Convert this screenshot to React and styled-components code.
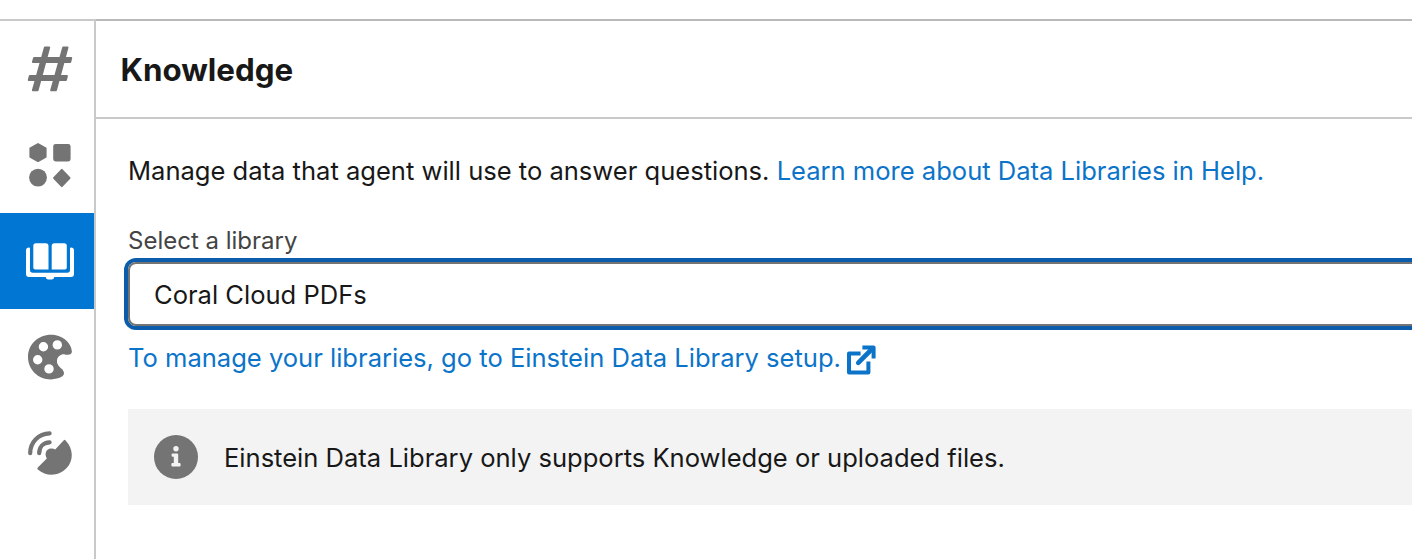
import React from "react";
import styled, { createGlobalStyle } from "styled-components";

const GlobalStyle = createGlobalStyle`
  * { box-sizing: border-box; }
  html, body { margin: 0; padding: 0; background: #fff; overflow: hidden; }
  body { font-family: Inter, "Liberation Sans", sans-serif; color: #181818; }
`;

const Page = styled.div`
  display: flex;
  flex-direction: column;
  height: 559px;
  padding-top: 19px;
  overflow: hidden;
`;

const Workspace = styled.div`
  display: flex;
  flex: 1;
  min-height: 0;
`;

const Rail = styled.nav`
  flex: 0 0 96px;
  display: flex;
  flex-direction: column;
  border-top: 2px solid #c9c9c9;
  border-right: 2px solid #c9c9c9;
`;

const RailItem = styled.a`
  display: flex;
  align-items: center;
  flex: 0 0 96px;
  padding-left: 26px;
  color: ${(p) => (p.$active ? "#fff" : "#747474")};
  background: ${(p) => (p.$active ? "#0176d3" : "transparent")};
`;

const RailIcon = styled.svg`
  width: 48px;
  height: 48px;
  fill: currentColor;
`;

const Panel = styled.main`
  flex: 1;
  min-width: 0;
  display: flex;
  flex-direction: column;
  border-top: 2px solid #b9b9b9;
`;

const PanelHeader = styled.header`
  display: flex;
  align-items: center;
  flex: 0 0 98px;
  padding: 2px 0 0 24.5px;
  border-bottom: 2px solid #c9c9c9;
`;

const Title = styled.h1`
  margin: 0;
  font-size: 31.3px;
  line-height: 40px;
  font-weight: 700;
`;

const Body = styled.section`
  display: flex;
  flex-direction: column;
  padding: 32px 0 0 32px;
`;

const Text = styled.p`
  margin: 0;
  font-size: 25.56px;
  line-height: 40px;
  white-space: nowrap;
`;

const Link = styled.a`
  color: #0b74c9;
  text-decoration: none;
`;

const Label = styled.label`
  margin-top: 30px;
  font-size: 24px;
  line-height: 40px;
  height: 41px;
  color: #444;
`;

const Combobox = styled.div`
  display: flex;
  align-items: center;
  height: 64px;
  margin-right: -40px;
  padding: 2px 0 0 24px;
  border: 2px solid #747474;
  border-radius: 8px;
  box-shadow: 0 0 0 4px #0b5cab;
`;

const SetupRow = styled.div`
  display: flex;
  align-items: center;
  height: 40px;
  margin-top: 12px;
`;

const ExternalIcon = styled.svg`
  width: 32px;
  height: 32px;
  margin: 4px 0 0 4px;
  fill: none;
  stroke: #0b74c9;
  stroke-width: 4;
`;

const Notice = styled.div`
  display: flex;
  align-items: center;
  gap: 26px;
  height: 96px;
  margin-top: 31px;
  padding-left: 26px;
  background: #f3f3f3;
`;

const NoticeText = styled(Text)`
  padding-top: 2px;
`;

const InfoIcon = styled.svg`
  width: 44px;
  height: 44px;
`;

const HashIcon = () => (
  <RailIcon viewBox="0 0 48 48">
    <g stroke="currentColor" strokeWidth="2" strokeLinejoin="round">
      <path d="M18.9 2.4H23.2L11.6 45.3H6.9Z" />
      <path d="M37.2 2.4H41.5L29.9 45.3H25.2Z" />
      <path d="M8.1 13H45.2L44.2 17.1H6.9Z" />
      <path d="M3.8 31H40.9L39.9 35.1H2.8Z" />
    </g>
  </RailIcon>
);

const ShapesIcon = () => (
  <RailIcon viewBox="0 0 48 48">
    <g stroke="currentColor" strokeWidth="2" strokeLinejoin="round">
      <path d="M12 3.1 19.6 7.4V15.8L12 20.1 4.4 15.8V7.4Z" />
      <path d="M35.8 28.9 43.5 37 35.8 45.1 28.1 37Z" />
    </g>
    <rect x="27.2" y="3" width="17.4" height="17.4" rx="2.4" />
    <circle cx="12" cy="36.6" r="8.9" />
  </RailIcon>
);

const BookIcon = () => (
  <RailIcon viewBox="0 0 48 48">
    <path d="M9.8 6.2H19.8Q22.5 6.2 22.5 8.9V32.4H9.3Q7.3 32.4 7.3 30.4V8.9Q7.3 6.2 9.8 6.2Z" />
    <path d="M28.3 6.2H38.3Q40.8 6.2 40.8 8.9V30.4Q40.8 32.4 38.8 32.4H25.7V8.9Q25.7 6.2 28.3 6.2Z" />
    <path d="M3 10.6Q4 10.6 4 11.6V33Q4 35.8 6.8 35.8H41.2Q44 35.8 44 33V11.6Q44 10.6 45 10.6Q48 10.6 48 13.6V37Q48 40 45 40H28.4Q27.8 42.6 25.6 42.6H22.4Q20.2 42.6 19.6 40H3Q0 40 0 37V13.6Q0 10.6 3 10.6Z" />
  </RailIcon>
);

const PaletteIcon = () => (
  <RailIcon viewBox="0 0 48 48">
    <path
      fillRule="evenodd"
      d="M25 1.8C12 1.8 2 11.6 2 24C2 36.6 12 46.4 25 46.4C29 46.4 33 45.4 36 43.6C38.8 42 38.4 39 36.4 36.6C33.4 33.2 30.6 31.6 31 27.4C31.4 23.4 35 21 38.6 21.4C41.5 22 45.9 22.6 45.9 18.6C45.4 9 35.4 1.8 25 1.8ZM17.4 9A4.7 4.7 0 1 1 17.4 18.4A4.7 4.7 0 1 1 17.4 9ZM31.3 7.2A4.7 4.7 0 1 1 31.3 16.6A4.7 4.7 0 1 1 31.3 7.2ZM11.7 22.1A4.7 4.7 0 1 1 11.7 31.5A4.7 4.7 0 1 1 11.7 22.1ZM23 31.2A4.7 4.7 0 1 1 23 40.6A4.7 4.7 0 1 1 23 31.2Z"
    />
  </RailIcon>
);

const SatelliteIcon = () => (
  <RailIcon viewBox="0 0 48 48">
    <path d="M37.8 11.3Q38.7 10.4 39.6 11.4C47.6 19.8 47.8 31.6 40.6 39C33 47.2 20.6 48 11.8 40.4Q10.8 39.4 11.8 38.4L20.8 29.4C18 24.8 20.4 20 24.8 19.6Q27.6 19.4 29.2 20.6Z" />
    <g fill="none" stroke="currentColor" strokeWidth="4.2" strokeLinecap="round">
      <path d="M4.2 24.2C4.2 12.8 12.6 4.8 23.6 4.4" />
      <path d="M13.2 24.2C13.2 17.8 17.4 13.6 23.6 13.4" />
    </g>
  </RailIcon>
);

const items = [
  { id: "topics", Icon: HashIcon },
  { id: "actions", Icon: ShapesIcon },
  { id: "knowledge", Icon: BookIcon, active: true },
  { id: "appearance", Icon: PaletteIcon },
  { id: "connections", Icon: SatelliteIcon },
];

export default function App() {
  return (
    <Page>
      <GlobalStyle />
      <Workspace>
        <Rail>
          {items.map(({ id, Icon, active }) => (
            <RailItem key={id} $active={active}>
              <Icon />
            </RailItem>
          ))}
        </Rail>
        <Panel>
          <PanelHeader>
            <Title>Knowledge</Title>
          </PanelHeader>
          <Body>
            <Text>
              Manage data that agent will use to answer questions.{" "}
              <Link>Learn more about Data Libraries in Help.</Link>
            </Text>
            <Label>Select a library</Label>
            <Combobox>
              <Text>Coral Cloud PDFs</Text>
            </Combobox>
            <SetupRow>
              <Text>
                <Link>To manage your libraries, go to Einstein Data Library setup.</Link>
              </Text>
              <ExternalIcon viewBox="0 0 32 32">
                <path d="M15.6 9.5H4V28.6H23.4V17.5" strokeLinejoin="round" />
                <path d="M13.2 18.8 27 5" strokeLinecap="round" strokeWidth="4.6" />
                <path d="M17.4 3.4H28.6V14.6" strokeLinejoin="round" />
              </ExternalIcon>
            </SetupRow>
            <Notice>
              <InfoIcon viewBox="0 0 44 44">
                <circle cx="22" cy="22" r="22" fill="#747474" />
                <circle cx="22" cy="13.8" r="2.7" fill="#f3f3f3" />
                <path
                  d="M18.6 18.4H23.2Q24.2 18.4 24.2 19.4V28H25.6Q26.6 28 26.6 29V30.4Q26.6 31.4 25.6 31.4H18.4Q17.4 31.4 17.4 30.4V29Q17.4 28 18.4 28H19.8V21.8H18.6Q17.6 21.8 17.6 20.8V19.4Q17.6 18.4 18.6 18.4Z"
                  fill="#f3f3f3"
                />
              </InfoIcon>
              <NoticeText>Einstein Data Library only supports Knowledge or uploaded files.</NoticeText>
            </Notice>
          </Body>
        </Panel>
      </Workspace>
    </Page>
  );
}
